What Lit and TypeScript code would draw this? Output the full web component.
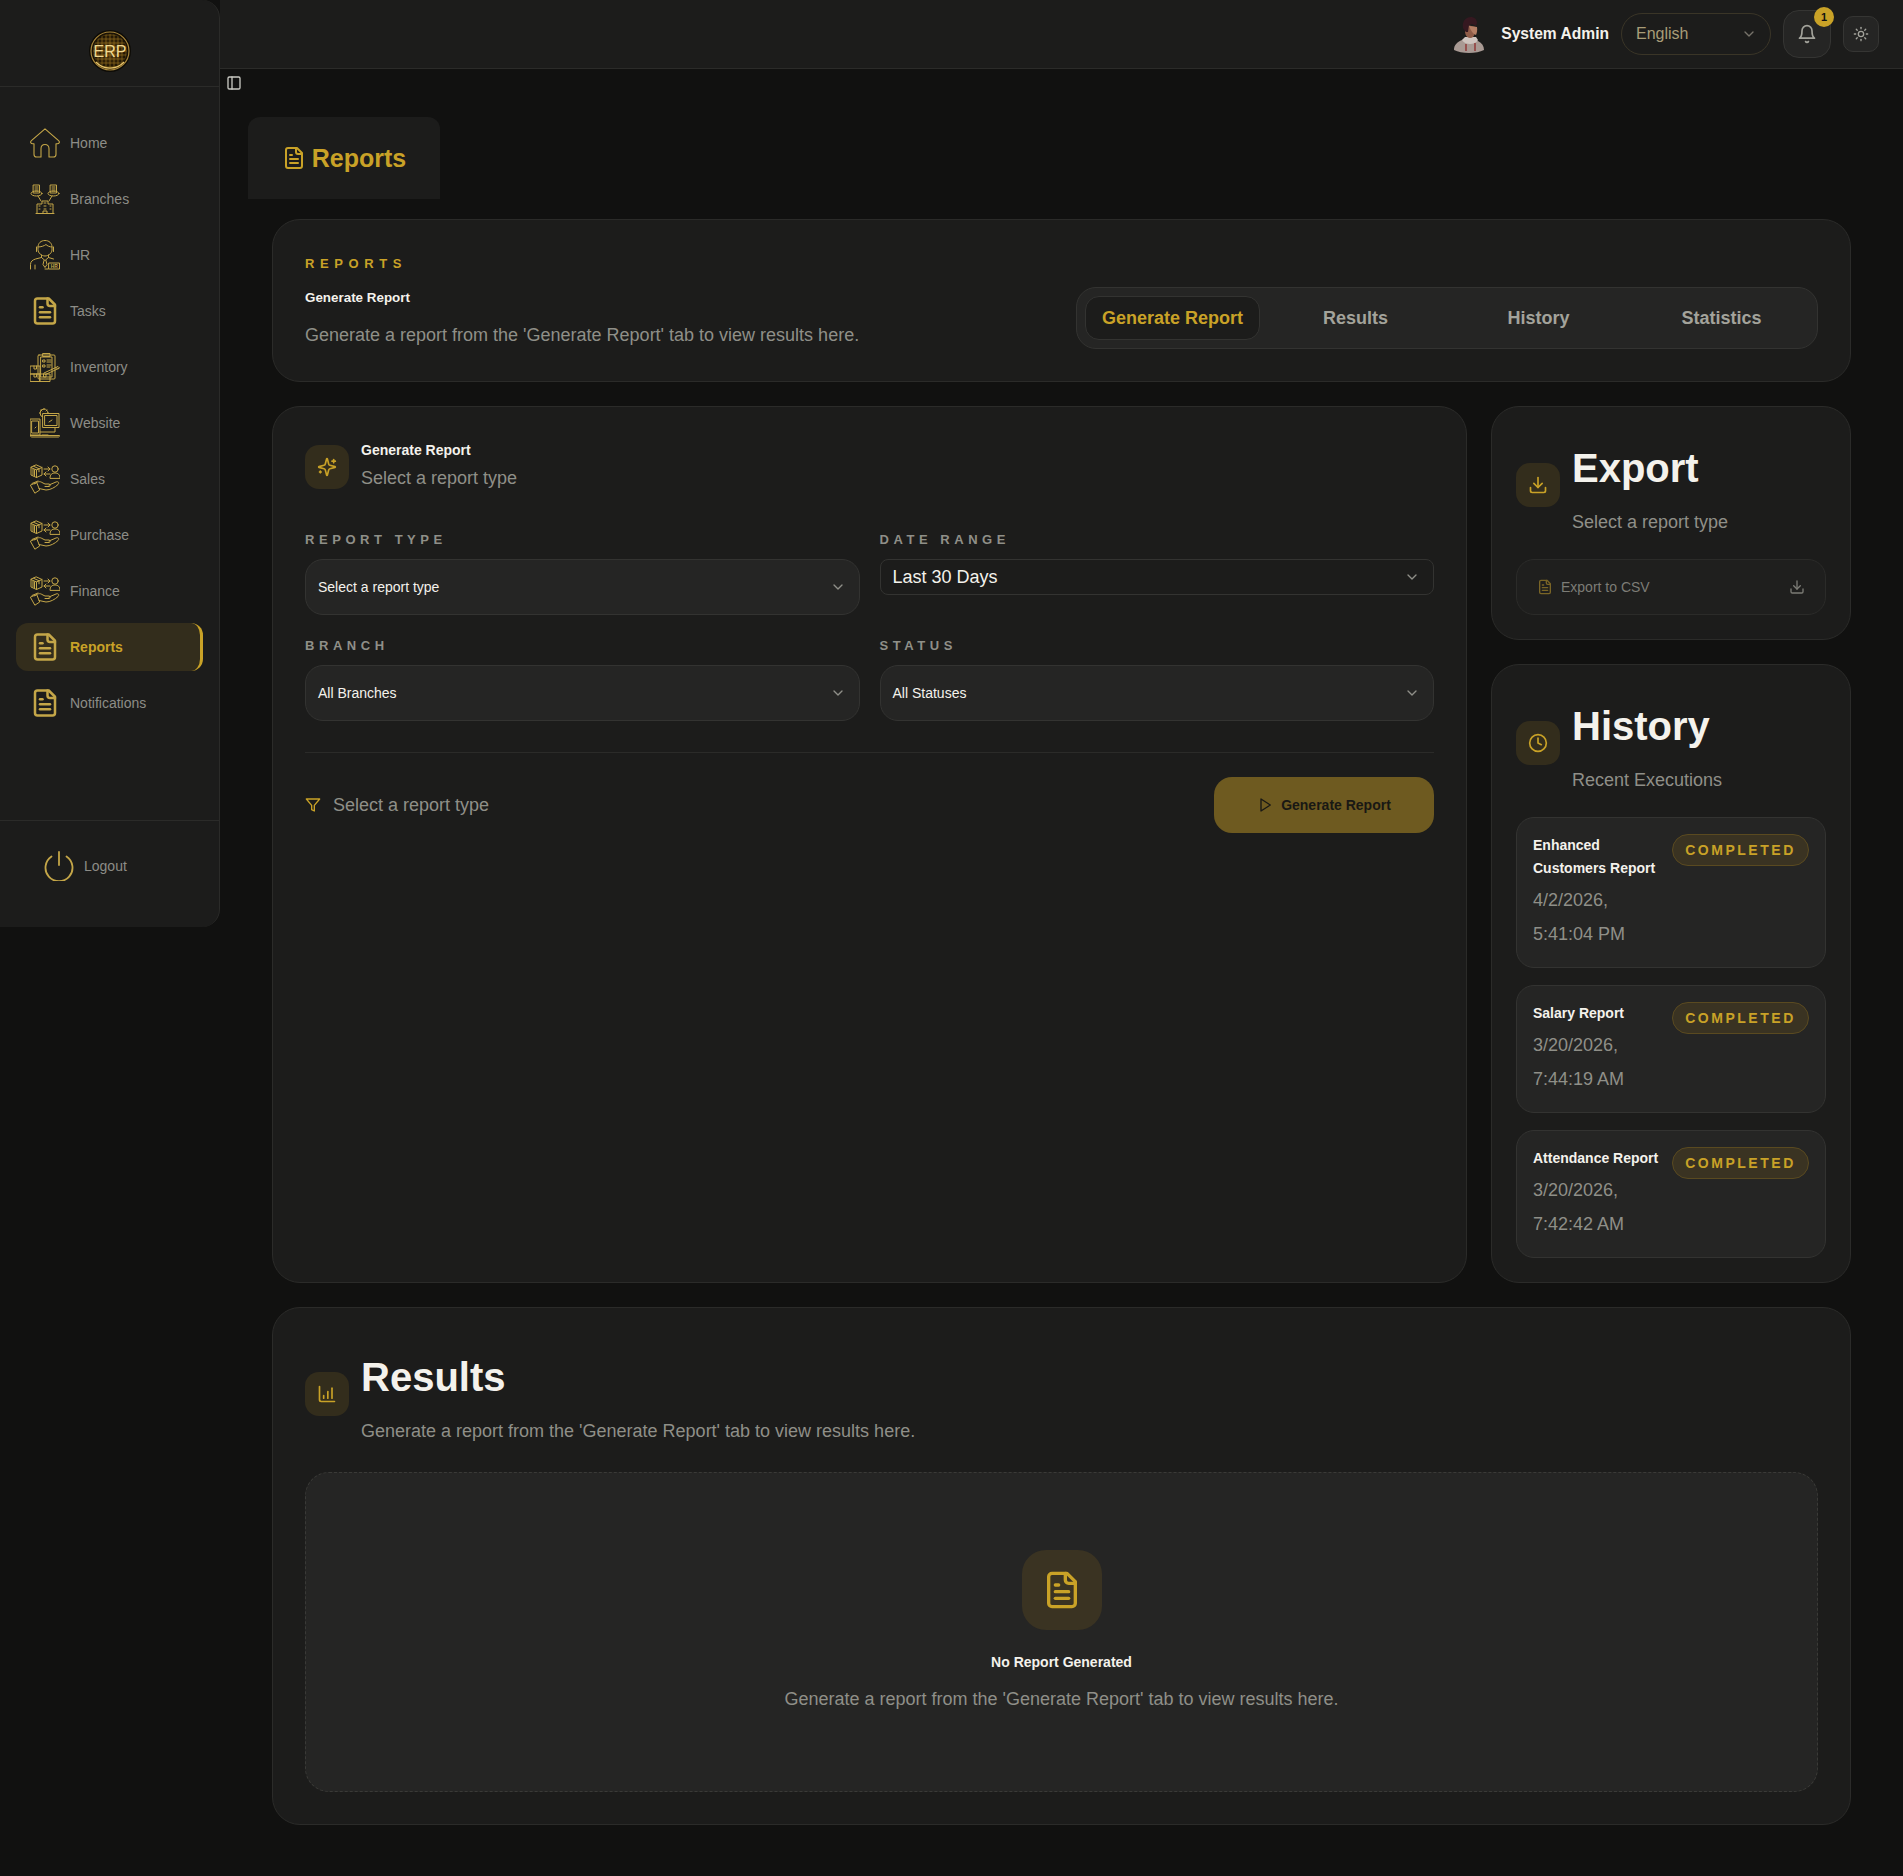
import { LitElement, html, css, svg } from 'lit';
import { customElement } from 'lit/decorators.js';

const icon = (body: unknown, size = 24, cls = '') => html`<svg class=${cls} width=${size} height=${size} viewBox="0 0 24 24" fill="none" stroke="currentColor" stroke-width="2" stroke-linecap="round" stroke-linejoin="round">${body}</svg>`;

const fileText = svg`<path d="M15 2H6a2 2 0 0 0-2 2v16a2 2 0 0 0 2 2h12a2 2 0 0 0 2-2V7Z"/><path d="M14 2v4a2 2 0 0 0 2 2h4"/><path d="M10 9H8"/><path d="M16 13H8"/><path d="M16 17H8"/>`;
const sparkles = svg`<path d="M9.937 15.5A2 2 0 0 0 8.5 14.063l-6.135-1.582a.5.5 0 0 1 0-.962L8.5 9.936A2 2 0 0 0 9.937 8.5l1.582-6.135a.5.5 0 0 1 .963 0L14.063 8.5A2 2 0 0 0 15.5 9.937l6.135 1.581a.5.5 0 0 1 0 .964L15.5 14.063a2 2 0 0 0-1.437 1.437l-1.582 6.135a.5.5 0 0 1-.963 0z"/><path d="M20 3v4"/><path d="M22 5h-4"/><path d="M4 17v2"/><path d="M5 18H3"/>`;
const download = svg`<path d="M21 15v4a2 2 0 0 1-2 2H5a2 2 0 0 1-2-2v-4"/><polyline points="7 10 12 15 17 10"/><line x1="12" y1="15" x2="12" y2="3"/>`;
const clock = svg`<circle cx="12" cy="12" r="10"/><polyline points="12 6 12 12 16 14"/>`;
const chart = svg`<path d="M3 3v16a2 2 0 0 0 2 2h16"/><path d="M8 17v-3"/><path d="M13 17V9"/><path d="M18 17V5"/>`;
const filter = svg`<polygon points="22 3 2 3 10 12.46 10 19 14 21 14 12.46 22 3"/>`;
const play = svg`<polygon points="6 3 20 12 6 21 6 3"/>`;
const chevron = svg`<path d="m6 9 6 6 6-6"/>`;
const bell = svg`<path d="M6 8a6 6 0 0 1 12 0c0 7 3 9 3 9H3s3-2 3-9"/><path d="M10.3 21a1.94 1.94 0 0 0 3.4 0"/>`;
const sun = svg`<circle cx="12" cy="12" r="4"/><path d="M12 2v2"/><path d="M12 20v2"/><path d="m4.93 4.93 1.41 1.41"/><path d="m17.66 17.66 1.41 1.41"/><path d="M2 12h2"/><path d="M20 12h2"/><path d="m6.34 17.66-1.41 1.41"/><path d="m19.07 4.93-1.41 1.41"/>`;
const panel = svg`<rect x="3" y="3" width="18" height="18" rx="2"/><path d="M9 3v18"/>`;

// sidebar art, 30x30 grid, thin gold lines
const art = (body: unknown) => html`<svg class="nav-art" width="30" height="30" viewBox="0 0 30 30" fill="none" stroke="currentColor" stroke-width="1" stroke-linecap="round" stroke-linejoin="round">${body}</svg>`;

const homeArt = svg`<path d="M15 .8 28.6 12.6c1.5 1.5.6 3.2-1.3 3.2H26v10.4c0 1.8-1 2.8-2.6 2.8H19v-8.2c0-2.8-1.6-4.3-4-4.3s-4 1.500-4 4.300v8.200H6.600c-1.600 0-2.600-1-2.600-2.800V15.800H2.700c-1.900 0-2.800-1.700-1.300-3.200Z" stroke-width="1.100"/>`;
const branchArt = svg`<rect x="3.500" y="1" width="6" height="8"/><rect x="20.500" y="1" width="6" height="8"/><path d="M5 3h3M5 5h3M5 7h3M22 3h3M22 5h3M22 7h3" /><ellipse cx="6.500" cy="9.500" rx="5.500" ry="2.500"/><ellipse cx="23.500" cy="9.500" rx="5.500" ry="2.500"/><path d="M8 12l3 5M22 12l-3 5"/><path d="M7 29V20h5v-3h6v3h5v9M6 29.500h18M14 19h2M14 22h2M14 25h2M9 22h1M9 25h1M20 22h1M20 25h1M13 29v-2h4v2"/>`;
const hrArt = svg`<path d="M8 7c0-4 3-6.500 7-6.500s7 2.500 7 6.500v3c0 3-3.500 6-7 6s-7-3-7-6Z"/><path d="M8 7c3 0 6-1 8-2.500 1 1.200 3.500 2.500 6 2.500M6.500 7v4.500M23.500 7v4.500"/><path d="M11.500 15v2.500l3.500 3 3.500-3V15M14 20.500l-1 4 2 3 2-3-1-4"/><path d="M.5 29v-4.500c0-3 2-4.500 5-5.500l6-1.500M18.500 17.500l5 1.500M5 29v-4M18 29h-3"/><rect x="19" y="23" width="10.500" height="6"/><text x="24.250" y="27.800" font-size="4.800" font-weight="700" text-anchor="middle" fill="currentColor" stroke="none" font-family="Liberation Sans, sans-serif">HR</text>`;
const docArt = svg`<g transform="scale(1.25)" stroke-width="2"><path d="M15 2H6a2 2 0 0 0-2 2v16a2 2 0 0 0 2 2h12a2 2 0 0 0 2-2V7Z"/><path d="M14 2v4a2 2 0 0 0 2 2h4"/><path d="M10 9H8"/><path d="M16 13H8"/><path d="M16 17H8"/></g>`;
const invArt = svg`<rect x="8" y="3" width="17" height="24" rx="1"/><rect x="11" y="5" width="11" height="20"/><path d="M13 1.500h7v3h-7zM13 8h2v2h-2zM17 8h4M17 10h4M13 13h2v2h-2zM17 13h4M17 15h3"/><path d="M.5 14H10v8H.5zM.5 22H10v7.500H.5zM10 22h10v7.500H10zM4 14v3h2.500v-3M4 22v3h2.500v-3M13.500 22v3H16v-3"/><path d="M14 21l14-6.500 1.500 1.500-14 6.500ZM26 15.500l1.500 1.500"/>`;
const webArt = svg`<circle cx="14" cy="5" r="4"/><path d="M14 .5v1M9.500 5h1M11 2l1 1M17 2l-1 1"/><rect x="13" y="5.500" width="16" height="14" fill="#1c1c1b"/><rect x="15" y="7.500" width="12" height="10"/><path d="M19 14l3-2"/><rect x=".5" y="11" width="9.500" height="16" fill="#1c1c1b"/><rect x="2" y="13" width="6.500" height="12"/><path d="M5 20l1-1M10 24h15v-4M.5 27.500c0 1 .5 1.500 1 1.500h27c.5 0 1-.5 1-1.500H.5ZM12 27h6"/>`;
const tradeArt = svg`<path d="M6.500 1 12 3.500v7.500L6.500 13.500 1 11V3.500ZM1 3.500l5.500 2.500L12 3.500M6.500 6v7.500M3.500 2.200 9 4.800v3M3 5v6M4.500 5.800v6.500"/><path d="M14 5h6M18 3l2 2-2 2M20 10h-6M16 8l-2 2 2 2"/><circle cx="25" cy="5" r="3.200"/><path d="M20 14c0-3.500 2-5 5-5s5 1.500 5 5Z"/><path d="M5 20c2-2.500 5-3 7-1.500l3 1.500h4c1.500 0 1.500 2.500 0 2.500h-4M19 21l7-3c2.500-1 3.500 1 2 2.500-3 3-8 5.500-12 5.500l-7-1.500M2 19.500l6-2.500M.7 21l6-2.500 3 7.500-4.500 3Z"/>`;
const powerArt = svg`<path d="M15 1v13" stroke-width="1.800"/><path d="M22.500 5.500a13.500 13.500 0 1 1-15 0" stroke-width="1.800"/>`;

const erpLogo = html`<svg width="44" height="44" viewBox="0 0 44 44">
  <defs>
    <radialGradient id="erpBg" cx="0.5" cy="0.5" r="0.55"><stop offset="0" stop-color="#5a3d0c"/><stop offset="1" stop-color="#0e0a04"/></radialGradient>
    <clipPath id="erpClip"><circle cx="22" cy="22" r="17"/></clipPath>
  </defs>
  <circle cx="22" cy="22" r="21" fill="#0d0b06"/>
  <circle cx="22" cy="22" r="19" fill="url(#erpBg)" stroke="#a8863a" stroke-width="1.200"/>
  <g clip-path="url(#erpClip)" stroke="#c9982c" stroke-width=".7" opacity=".65">
    ${[6, 10, 14, 18, 22, 26, 30, 34, 38].map((n) => svg`<path d="M${n} 2V42M2 ${n}H42"/>`)}
  </g>
  <path d="M8 33a19 19 0 0 0 28 0" fill="none" stroke="#e8c468" stroke-width="1.200"/>
  <text x="22" y="28" text-anchor="middle" font-size="16" fill="#f0d890" font-family="Liberation Sans, sans-serif">ERP</text>
</svg>`;

const avatar = html`<svg width="32" height="38" viewBox="0 0 32 38">
  <path d="M1 35c0-5 3-8 8-10l5-2h6l5 3c4 2 6 5 6 9-4 2-9 3-15 3S5 37 1 35Z" fill="#a99a94"/>
  <path d="M9 25c2 3 5 4 8 4s6-1 8-4l-2-3H12Z" fill="#cfc4bf"/>
  <path d="M13 29v7M22 28v8" stroke="#8e2c2c" stroke-width="1.300"/>
  <path d="M12 16c0 4 2 7 5 7s4-2 5-5l1-6-9-2Z" fill="#8f5c48"/>
  <path d="M16 11l8 1c.5 3 0 6-1 8-3-1-5-4-7-9Z" fill="#b47e64"/>
  <path d="M10 13C9 7 12 2 18 2c3 0 6 2 6 6l-1 3c-3-2-5-2-7-1l-1 7h-2c-1-1-2-2-3-4Z" fill="#351820"/>
</svg>`;

const navItems = [
  { label: 'Home', art: homeArt },
  { label: 'Branches', art: branchArt },
  { label: 'HR', art: hrArt },
  { label: 'Tasks', art: docArt },
  { label: 'Inventory', art: invArt },
  { label: 'Website', art: webArt },
  { label: 'Sales', art: tradeArt },
  { label: 'Purchase', art: tradeArt },
  { label: 'Finance', art: tradeArt },
  { label: 'Reports', art: docArt, active: true },
  { label: 'Notifications', art: docArt },
];

const tabs = ['Generate Report', 'Results', 'History', 'Statistics'];

const runs = [
  { name: 'Enhanced Customers Report', date: '4/2/2026, 5:41:04 PM' },
  { name: 'Salary Report', date: '3/20/2026, 7:44:19 AM' },
  { name: 'Attendance Report', date: '3/20/2026, 7:42:42 AM' },
];

const emptyText = "Generate a report from the 'Generate Report' tab to view results here.";

@customElement('app-root')
export class AppRoot extends LitElement {
  static styles = css`
    :host {
      display: block;
      min-height: 1876px;
      background: #111110;
      color: #f4f2ec;
      font-family: 'Liberation Sans', Arial, sans-serif;
    }
    * { box-sizing: border-box; }

    .shell { display: flex; align-items: flex-start; }

    .sidebar {
      width: 220px;
      height: 927px;
      flex: none;
      display: flex;
      flex-direction: column;
      background: #1c1c1b;
      border-right: 1px solid #2b2b29;
      border-radius: 0 18px 18px 0;
    }
    .brand {
      height: 87px;
      display: flex;
      align-items: center;
      justify-content: center;
      border-bottom: 1px solid #2b2b29;
      padding-top: 16px;
    }
    .nav {
      flex: 1;
      display: flex;
      flex-direction: column;
      gap: 8px;
      padding: 32px 16px 0;
    }
    .nav-item {
      height: 48px;
      display: flex;
      align-items: center;
      gap: 10px;
      padding-left: 14px;
      font-size: 14px;
      color: #8d8d87;
      border-radius: 12px;
    }
    .nav-item .nav-art { color: #c4a648; flex: none; }
    .nav-item.active {
      background: #332d1c;
      color: #c9a227;
      font-weight: 700;
      border-right: 3px solid #c9a227;
    }
    .logout {
      height: 107px;
      border-top: 1px solid #2b2b29;
      display: flex;
      align-items: center;
      gap: 10px;
      padding: 0 0 17px 44px;
      font-size: 14px;
      color: #8d8d87;
    }
    .logout svg { color: #c4a648; }

    .main { flex: 1; min-width: 0; }

    .topbar {
      height: 69px;
      display: flex;
      align-items: center;
      justify-content: flex-end;
      background: #1c1c1b;
      border-bottom: 1px solid #2b2b29;
      padding: 0 24px 1px 0;
    }
    .avatar { display: flex; margin-right: 16px; }
    .user { font-size: 15.6px; font-weight: 700; color: #f4f2ec; margin-right: 12px; }
    .lang {
      width: 150px;
      height: 42px;
      display: flex;
      align-items: center;
      justify-content: space-between;
      padding: 0 13px 0 14px;
      border: 1px solid #3a3527;
      border-radius: 21px;
      font-size: 16px;
      color: #a89c78;
      margin-right: 12px;
    }
    .lang svg { color: #77736a; }
    .bell {
      position: relative;
      width: 48px;
      height: 48px;
      display: flex;
      align-items: center;
      justify-content: center;
      background: #252524;
      border: 1px solid #353533;
      border-radius: 16px;
      color: #a3a39b;
      margin-right: 12px;
    }
    .badge {
      position: absolute;
      top: -4px;
      right: -4px;
      width: 20px;
      height: 20px;
      border-radius: 50%;
      background: #c9a227;
      color: #111;
      font-size: 11px;
      font-weight: 700;
      display: flex;
      align-items: center;
      justify-content: center;
    }
    .theme {
      width: 36px;
      height: 36px;
      display: flex;
      align-items: center;
      justify-content: center;
      background: #252524;
      border: 1px solid #353533;
      border-radius: 10px;
      color: #a3a39b;
    }

    .toggle {
      height: 28px;
      display: flex;
      align-items: center;
      padding-left: 6px;
      color: #c9c9c2;
    }

    .content {
      padding: 20px 52px 52px;
      display: flex;
      flex-direction: column;
      gap: 24px;
    }
    .page-tab {
      width: 192px;
      height: 82px;
      margin: 0 0 -4px -24px;
      display: flex;
      align-items: center;
      justify-content: center;
      gap: 6px;
      background: #1c1c1b;
      border-radius: 12px 12px 0 0;
      color: #c9a227;
      font-size: 25px;
      font-weight: 700;
    }

    .card {
      background: #1c1c1b;
      border: 1px solid #2b2b29;
      border-radius: 28px;
    }
    .intro {
      display: flex;
      justify-content: space-between;
      align-items: flex-end;
      padding: 32px;
    }
    .eyebrow {
      font-size: 13px;
      line-height: 24px;
      font-weight: 700;
      letter-spacing: 0.43em;
      color: #c9a227;
      margin-bottom: 11px;
    }
    .small-title {
      font-size: 14px;
      line-height: 22px;
      font-weight: 700;
      color: #f4f2ec;
    }
    .muted { font-size: 18px; line-height: 34px; color: #8f8f88; }
    .intro .small-title { font-size: 13.4px; margin-bottom: 12px; }
    .intro .muted { line-height: 28px; }

    .tabs {
      width: 742px;
      height: 62px;
      display: grid;
      grid-template-columns: repeat(4, 175px);
      gap: 8px;
      padding: 8px;
      background: #252524;
      border: 1px solid #333331;
      border-radius: 20px;
    }
    .tab {
      display: flex;
      align-items: center;
      justify-content: center;
      font-size: 18px;
      font-weight: 700;
      color: #a3a39b;
      border: 1px solid transparent;
      border-radius: 14px;
    }
    .tab.active {
      background: #1c1c1b;
      border-color: #333331;
      color: #c9a227;
    }

    .columns {
      display: grid;
      grid-template-columns: 1fr 360px;
      gap: 24px;
    }
    .side { display: flex; flex-direction: column; gap: 24px; }

    .generate { padding: 32px; }
    .head { display: flex; align-items: center; gap: 12px; }
    .icon-box {
      width: 44px;
      height: 44px;
      flex: none;
      display: flex;
      align-items: center;
      justify-content: center;
      background: #332d1c;
      border-radius: 14px;
      color: #c9a227;
    }
    .generate .head { margin-bottom: 35px; }

    .fields {
      display: grid;
      grid-template-columns: 1fr 1fr;
      gap: 21px 20px;
      align-items: start;
    }
    .field-label {
      font-size: 13px;
      line-height: 20px;
      font-weight: 700;
      letter-spacing: 0.35em;
      color: #8f8f88;
      margin-bottom: 9px;
    }
    .select {
      height: 56px;
      display: flex;
      align-items: center;
      justify-content: space-between;
      padding: 0 13px 0 12px;
      background: #252524;
      border: 1px solid #333331;
      border-radius: 18px;
      font-size: 14px;
      color: #f4f2ec;
    }
    .select svg { color: #8f8f88; }
    .select.plain {
      height: 36px;
      background: #1c1c1b;
      border-radius: 8px;
      font-size: 18px;
    }

    .actions {
      margin-top: 31px;
      border-top: 1px solid #2b2b29;
      padding-top: 24px;
      display: flex;
      align-items: center;
      justify-content: space-between;
    }
    .hint { display: flex; align-items: center; gap: 12px; }
    .hint svg { color: #c9a227; }
    .run {
      width: 220px;
      height: 56px;
      display: flex;
      align-items: center;
      justify-content: center;
      gap: 8px;
      background: #6e5a20;
      border-radius: 18px;
      font-size: 14px;
      font-weight: 700;
      color: #191814;
    }

    .panel { padding: 24px; }
    .big-title { font-size: 40px; line-height: 74px; font-weight: 700; color: #f4f2ec; }

    .export-btn {
      margin-top: 20px;
      height: 56px;
      display: flex;
      align-items: center;
      gap: 8px;
      padding: 0 20px;
      background: #1f1f1e;
      border: 1px solid #2b2b29;
      border-radius: 18px;
      font-size: 14px;
      color: #7c7c76;
    }
    .export-btn .doc { color: #7a6526; }
    .export-btn .end { margin-left: auto; color: #7c7c76; }

    .runs { margin-top: 20px; display: flex; flex-direction: column; gap: 17px; }
    .run-item {
      display: flex;
      align-items: flex-start;
      gap: 12px;
      padding: 16px;
      background: #252524;
      border: 1px solid #333331;
      border-radius: 18px;
    }
    .run-text { flex: 1; min-width: 0; }
    .run-name { font-size: 14px; line-height: 23px; font-weight: 700; color: #f4f2ec; margin-bottom: 3px; }
    .run-date { font-size: 18px; line-height: 34px; color: #8f8f88; }
    .status {
      flex: none;
      width: 137px;
      height: 32px;
      display: flex;
      align-items: center;
      justify-content: center;
      background: #3a3322;
      border: 1px solid #5a4a20;
      border-radius: 16px;
      font-size: 14px;
      font-weight: 700;
      letter-spacing: 0.18em;
      color: #c9a227;
    }

    .results { padding: 32px; }
    .empty {
      margin-top: 24px;
      height: 320px;
      display: flex;
      flex-direction: column;
      align-items: center;
      padding-top: 77px;
      background: #252524;
      border: 1px dashed #3a3a37;
      border-radius: 24px;
    }
    .empty-icon {
      width: 80px;
      height: 80px;
      display: flex;
      align-items: center;
      justify-content: center;
      background: #3a3322;
      border-radius: 24px;
      color: #c9a227;
      margin-bottom: 21px;
    }
    .empty .small-title { margin-bottom: 9px; }
  `;

  renderSelect(text: string, plain = false) {
    return html`<div class="select ${plain ? 'plain' : ''}"><span>${text}</span>${icon(chevron, 16)}</div>`;
  }

  renderField(label: string, text: string, plain = false) {
    return html`<div>
      <div class="field-label">${label}</div>
      ${this.renderSelect(text, plain)}
    </div>`;
  }

  render() {
    return html`
      <div class="shell">
        <aside class="sidebar">
          <div class="brand">${erpLogo}</div>
          <nav class="nav">
            ${navItems.map((n) => html`<div class="nav-item ${n.active ? 'active' : ''}">${art(n.art)}<span>${n.label}</span></div>`)}
          </nav>
          <div class="logout">${art(powerArt)}<span>Logout</span></div>
        </aside>

        <div class="main">
          <header class="topbar">
            <span class="avatar">${avatar}</span>
            <span class="user">System Admin</span>
            <div class="lang"><span>English</span>${icon(chevron, 16)}</div>
            <div class="bell">${icon(bell, 20)}<span class="badge">1</span></div>
            <div class="theme">${icon(sun, 16)}</div>
          </header>
          <div class="toggle">${icon(panel, 16)}</div>

          <div class="content">
            <div class="page-tab">${icon(fileText, 24)}<span>Reports</span></div>

            <section class="card intro">
              <div>
                <div class="eyebrow">REPORTS</div>
                <div class="small-title">Generate Report</div>
                <div class="muted">${emptyText}</div>
              </div>
              <div class="tabs">
                ${tabs.map((t, i) => html`<div class="tab ${i === 0 ? 'active' : ''}">${t}</div>`)}
              </div>
            </section>

            <div class="columns">
              <section class="card generate">
                <div class="head">
                  <div class="icon-box">${icon(sparkles, 20)}</div>
                  <div>
                    <div class="small-title">Generate Report</div>
                    <div class="muted">Select a report type</div>
                  </div>
                </div>
                <div class="fields">
                  ${this.renderField('REPORT TYPE', 'Select a report type')}
                  ${this.renderField('DATE RANGE', 'Last 30 Days', true)}
                  ${this.renderField('BRANCH', 'All Branches')}
                  ${this.renderField('STATUS', 'All Statuses')}
                </div>
                <div class="actions">
                  <div class="hint">${icon(filter, 16)}<span class="muted">Select a report type</span></div>
                  <div class="run">${icon(play, 16)}<span>Generate Report</span></div>
                </div>
              </section>

              <div class="side">
                <section class="card panel">
                  <div class="head">
                    <div class="icon-box">${icon(download, 20)}</div>
                    <div>
                      <div class="big-title">Export</div>
                      <div class="muted">Select a report type</div>
                    </div>
                  </div>
                  <div class="export-btn">
                    ${icon(fileText, 16, 'doc')}<span>Export to CSV</span>${icon(download, 16, 'end')}
                  </div>
                </section>

                <section class="card panel">
                  <div class="head">
                    <div class="icon-box">${icon(clock, 20)}</div>
                    <div>
                      <div class="big-title">History</div>
                      <div class="muted">Recent Executions</div>
                    </div>
                  </div>
                  <div class="runs">
                    ${runs.map((r) => html`<div class="run-item">
                      <div class="run-text">
                        <div class="run-name">${r.name}</div>
                        <div class="run-date">${r.date}</div>
                      </div>
                      <div class="status">COMPLETED</div>
                    </div>`)}
                  </div>
                </section>
              </div>
            </div>

            <section class="card results">
              <div class="head">
                <div class="icon-box">${icon(chart, 20)}</div>
                <div>
                  <div class="big-title">Results</div>
                  <div class="muted">${emptyText}</div>
                </div>
              </div>
              <div class="empty">
                <div class="empty-icon">${icon(fileText, 40)}</div>
                <div class="small-title">No Report Generated</div>
                <div class="muted">${emptyText}</div>
              </div>
            </section>
          </div>
        </div>
      </div>
    `;
  }
}
